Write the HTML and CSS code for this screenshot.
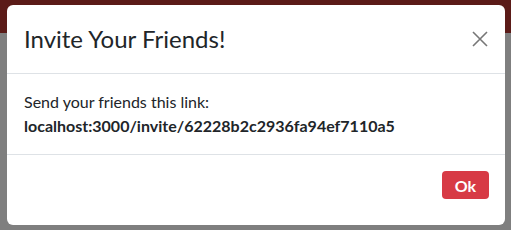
FILE: index.html
```html
<!DOCTYPE html>
<html lang="en">
<head>
    <meta charset="UTF-8">
    <meta name="viewport" content="width=device-width, initial-scale=1.0">
    <title>Invite</title>
    <link rel="stylesheet" href="styles.css">
</head>
<body>
    <div class="navbar"></div>
    <div class="page"></div>

    <div class="modal">
        <div class="modal-header">
            <h5 class="modal-title">Invite Your Friends!</h5>
            <button class="close" aria-label="Close">
                <svg width="16" height="16" viewBox="0 0 16 16">
                    <path d="M1 1 L15 15 M15 1 L1 15" stroke="#777" stroke-width="1.6" fill="none"/>
                </svg>
            </button>
        </div>
        <div class="modal-body">
            <p>Send your friends this link:</p>
            <p class="link">localhost:3000/invite/62228b2c2936fa94ef7110a5</p>
        </div>
        <div class="modal-footer">
            <button class="btn-ok">Ok</button>
        </div>
    </div>
</body>
</html>
```

FILE: styles.css
```css
body {
    margin: 0;
    padding: 0;
    font-family: Lato, "Noto Sans", sans-serif;
    background-color: #7f7f7f;
    height: 230px;
    overflow: hidden;
}
.navbar {
    height: 33px;
    background-color: #5b1b18;
}
.page {
    height: 197px;
    background-color: #7f7f7f;
}
.modal {
    position: absolute;
    left: 7px;
    top: 5px;
    width: 498px;
    height: 220px;
    background-color: #fff;
    border-radius: 6px;
    display: flex;
    flex-direction: column;
    color: #212529;
}
.modal-header {
    display: flex;
    align-items: center;
    justify-content: space-between;
    padding: 16px 16px 16px 17px;
    border-bottom: 1px solid #dee2e6;
}
.modal-title {
    margin: 0;
    font-size: 24px;
    font-weight: 400;
    line-height: 36px;
}
.close {
    border: none;
    background: none;
    padding: 0;
    margin-right: 0;
    width: 18px;
    height: 18px;
    display: flex;
    align-items: center;
    justify-content: center;
    cursor: pointer;
}
.modal-body {
    padding: 16px 17px;
    border-bottom: 1px solid #dee2e6;
}
.modal-body p {
    margin: 0;
    font-size: 16px;
    line-height: 24px;
}
.modal-body .link {
    font-weight: 700;
}
.modal-footer {
    flex: 1;
    display: flex;
    justify-content: flex-end;
    align-items: flex-start;
    padding: 16px 16px 0;
}
.btn-ok {
    width: 47px;
    height: 28px;
    border: none;
    border-radius: 4px;
    background-color: #d73a45;
    color: #fff;
    font-family: Lato, "Noto Sans", sans-serif;
    font-size: 16px;
    font-weight: 700;
    cursor: pointer;
}
```
